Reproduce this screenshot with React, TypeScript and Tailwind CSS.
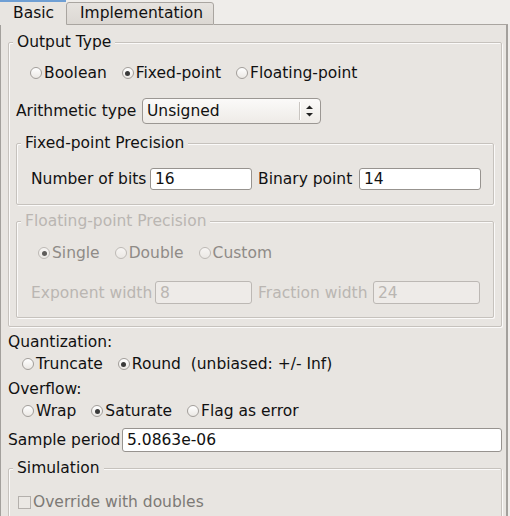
import React from 'react';

const PANEL = 'bg-[#e8e5e1]';

interface RadioProps {
  label: string;
  checked?: boolean;
  disabled?: boolean;
}

function Radio({ label, checked, disabled }: RadioProps) {
  return (
    <div className="flex items-center h-[20px]">
      <span
        className={`w-[12px] h-[12px] rounded-full border flex items-center justify-center bg-gradient-to-b ${
          disabled ? 'border-[#bdb9b5] from-[#f7f5f3] to-[#ebe8e4]' : 'border-[#a29e9a] from-white to-[#ebe8e4]'
        }`}
      >
        {checked && (
          <span className={`w-[5px] h-[5px] rounded-full ${disabled ? 'bg-[#5e5c5a]' : 'bg-[#3a3a3a]'}`} />
        )}
      </span>
      <span className={`ml-[2px] whitespace-pre ${disabled ? 'text-[#8f8b87]' : ''}`}>{label}</span>
    </div>
  );
}

interface GroupProps {
  title: string;
  disabled?: boolean;
  className?: string;
  children: React.ReactNode;
}

// etched frame with the title sitting over the top line
function GroupBox({ title, disabled, className, children }: GroupProps) {
  return (
    <div
      className={`relative border border-[#c6c2bd] rounded-[2px] shadow-[inset_1px_1px_0_#fbfaf9,1px_1px_0_#fbfaf9] ${className ?? ''}`}
    >
      <span
        className={`absolute left-[4px] top-[-10px] px-[4px] leading-[18px] ${PANEL} ${disabled ? 'text-[#bab6b2]' : ''}`}
      >
        {title}
      </span>
      {children}
    </div>
  );
}

function TextField({ value, width, disabled }: { value: string; width: string; disabled?: boolean }) {
  return (
    <div
      className={`${width} flex items-center px-[4px] rounded-[3px] border ${
        disabled ? 'h-[23px] border-[#bcb8b4] bg-[#eeebe8] text-[#bab6b2]' : 'h-[22px] border-[#97938f] bg-white'
      }`}
    >
      {value}
    </div>
  );
}

export default function App() {
  return (
    <div className="w-[510px] h-[516px] overflow-hidden bg-[#efedea] text-[15.5px] leading-[18px] text-[#111] font-['DejaVu_Sans',sans-serif]">
      {/* Tabs */}
      <div className="flex items-end h-[25px]">
        <div className={`w-[66px] h-[25px] ${PANEL} border-t-2 border-[#6f9fd4] pl-[13px] pt-[2px]`}>Basic</div>
        <div className="w-[148px] h-[23px] rounded-t-[3px] border border-[#a9a5a0] bg-gradient-to-b from-[#e6e3df] to-[#dcd8d3] pl-[13px] pt-[1px]">
          Implementation
        </div>
        <div className="w-[294px] h-[25px] border-b border-[#a9a5a0]" />
      </div>

      {/* Panel */}
      <div className={`w-[508px] h-[491px] ${PANEL} border-l border-r-2 border-[#a3a09c] flex flex-col`}>
        <GroupBox title="Output Type" className="ml-[7px] mt-[17px] w-[494px] pb-[8px]">
          <div className="flex gap-[15px] mt-[20px] pl-[21px]">
            <Radio label="Boolean" />
            <Radio label="Fixed-point" checked />
            <Radio label="Floating-point" />
          </div>

          <div className="flex items-center mt-[15px] pl-[7px]">
            <span className="w-[126px]">Arithmetic type</span>
            <div className="w-[179px] h-[26px] flex items-center rounded-[4px] border border-[#9b9793] bg-gradient-to-b from-[#fbfaf9] to-[#eeebe7]">
              <span className="flex-1 pl-[4px]">Unsigned</span>
              <span className="w-[1px] h-[18px] bg-[#c9c5c1] shadow-[1px_0_0_#fff]" />
              <svg width="20" height="14" viewBox="0 0 20 14">
                <path d="M6 5 L9.5 1.5 L13 5 Z" fill="#222" />
                <path d="M6 9 L9.5 12.5 L13 9 Z" fill="#222" />
              </svg>
            </div>
          </div>

          <GroupBox title="Fixed-point Precision" className="ml-[7px] mt-[19px] w-[478px] pb-[14px]">
            <div className="flex items-center mt-[24px] pl-[14px]">
              <span className="w-[119px]">Number of bits</span>
              <TextField value="16" width="w-[102px]" />
              <span className="w-[107px] pl-[6px]">Binary point</span>
              <TextField value="14" width="w-[122px]" />
            </div>
          </GroupBox>

          <GroupBox title="Floating-point Precision" disabled className="ml-[7px] mt-[16px] w-[478px] pb-[13px]">
            <div className="flex gap-[15px] mt-[21px] pl-[21px]">
              <Radio label="Single" checked disabled />
              <Radio label="Double" disabled />
              <Radio label="Custom" disabled />
            </div>
            <div className="flex items-center mt-[18px] pl-[14px] text-[#bab6b2]">
              <span className="w-[124px]">Exponent width</span>
              <TextField value="8" width="w-[97px]" disabled />
              <span className="w-[121px] pl-[6px]">Fraction width</span>
              <TextField value="24" width="w-[107px]" disabled />
            </div>
          </GroupBox>
        </GroupBox>

        <div className="ml-[7px] mt-[6px]">Quantization:</div>
        <div className="flex gap-[15px] mt-[3px] pl-[21px]">
          <Radio label="Truncate" />
          <Radio label="Round  (unbiased: +/- Inf)" checked />
        </div>

        <div className="ml-[7px] mt-[6px]">Overflow:</div>
        <div className="flex gap-[15px] mt-[3px] pl-[21px]">
          <Radio label="Wrap" />
          <Radio label="Saturate" checked />
          <Radio label="Flag as error" />
        </div>

        <div className="flex items-center ml-[7px] mt-[7px]">
          <span className="w-[114px]">Sample period</span>
          <div className="w-[380px] h-[24px] flex items-center px-[4px] rounded-[3px] border border-[#97938f] bg-white">
            5.0863e-06
          </div>
        </div>

        <GroupBox title="Simulation" className="ml-[7px] mt-[16px] w-[494px] h-[80px] shrink-0">
          <div className="flex items-center mt-[24px] pl-[9px] text-[#7d7a76]">
            <span className="w-[13px] h-[13px] border border-[#b4b0ac] bg-[#ebe8e4]" />
            <span className="ml-[2px]">Override with doubles</span>
          </div>
        </GroupBox>
      </div>
    </div>
  );
}
